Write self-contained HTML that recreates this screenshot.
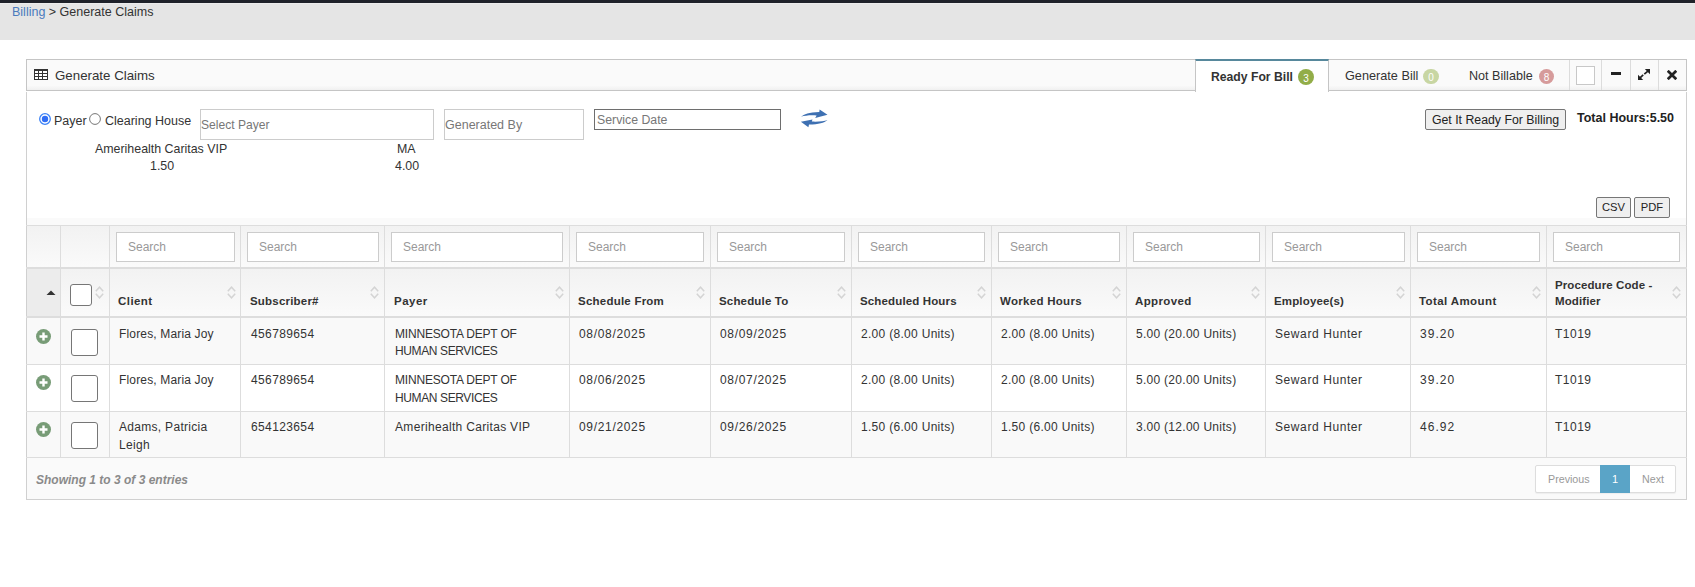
<!DOCTYPE html>
<html><head><meta charset="utf-8">
<style>
*{box-sizing:border-box;margin:0;padding:0}
html,body{width:1695px;height:587px;overflow:hidden;background:#fff}
body{position:relative;font-family:"Liberation Sans",sans-serif;font-size:13px;color:#333}
.a{position:absolute;white-space:nowrap}
#topbar{left:0;top:0;width:1695px;height:3px;background:#1f222a}
#band{left:0;top:3px;width:1695px;height:37px;background:#e5e5e5;border-top:1px solid #ececec}
#hdr{left:26px;top:59px;width:1661px;height:32px;border:1px solid #c5c5c5;background:linear-gradient(to bottom,#fafafa 0,#fafafa 85%,#f0f0f0 100%)}
#body{left:26px;top:92px;width:1661px;height:408px;border:1px solid #d0d0d0;border-top:none;background:#fff}
.tab{top:59px;height:32px}
.badge{width:16px;height:16px;border-radius:8px;color:#fff;font-size:10px;text-align:center;line-height:19px}
.sep{top:60px;width:1px;height:30px;background:#dcdcdc}
.inp{border:1px solid #ccc;background:#fff;color:#777}
.btn{border:1px solid #767676;border-radius:2px;background:#efefef;color:#222;text-align:center}
.vl{width:1px;background:#ddd}
.hl{height:1px;background:#ddd}
.srch{top:232px;height:30px;border:1px solid #ccc;background:#fff;color:#999;font-size:12px;padding:7px 0 0 11px}
.th{font-weight:bold;font-size:11.5px;color:#333}
.td{font-size:12px;color:#333;line-height:17px}
.sort{width:10px;height:14px}
.cb{border:1px solid #767676;border-radius:3px;background:#fff}
.plus{width:15px;height:15px}
</style></head>
<body>
<div id="topbar" class="a"></div>
<div id="band" class="a"></div>
<div class="a" style="left:12px;top:5px;font-size:12.5px;color:#333"><span style="color:#4b7bbd">Billing</span> &gt; Generate Claims</div>

<!-- panel header -->
<div id="hdr" class="a"></div>
<svg class="a" style="left:34px;top:69px" width="14" height="11" viewBox="0 0 14 11" shape-rendering="crispEdges">
<rect x="0" y="0" width="14" height="11" fill="#333"/>
<rect x="1" y="2" width="3" height="2" fill="#fff"/><rect x="5" y="2" width="3" height="2" fill="#fff"/><rect x="9" y="2" width="4" height="2" fill="#fff"/>
<rect x="1" y="5" width="3" height="2" fill="#fff"/><rect x="5" y="5" width="3" height="2" fill="#fff"/><rect x="9" y="5" width="4" height="2" fill="#fff"/>
<rect x="1" y="8" width="3" height="2" fill="#fff"/><rect x="5" y="8" width="3" height="2" fill="#fff"/><rect x="9" y="8" width="4" height="2" fill="#fff"/>
</svg>
<div class="a" style="left:55px;top:68px;font-size:13.3px;color:#333">Generate Claims</div>

<!-- active tab -->
<div class="a tab" style="left:1195px;width:134px;height:33px;background:#fff;border-left:1px solid #c5c5c5;border-right:1px solid #c5c5c5;border-top:2px solid #57889c"></div>
<div class="a" style="left:1211px;top:70px;font-size:12.2px;font-weight:bold;color:#333">Ready For Bill</div>
<div class="a badge" style="left:1298px;top:69px;background:#92ad48">3</div>

<div class="a" style="left:1345px;top:69px;font-size:12.7px;color:#333">Generate Bill</div>
<div class="a badge" style="left:1423px;top:69px;height:15px;line-height:17px;background:#c8d6a3">0</div>

<div class="a" style="left:1469px;top:69px;font-size:12.6px;color:#333">Not Billable</div>
<div class="a badge" style="left:1539px;top:69px;width:15px;height:15px;line-height:17px;background:#d69b9b">8</div>

<div class="a sep" style="left:1569px"></div>
<div class="a sep" style="left:1601px"></div>
<div class="a sep" style="left:1630px"></div>
<div class="a sep" style="left:1658px"></div>
<div class="a" style="left:1576px;top:66px;width:19px;height:19px;border:1px solid #c8c8c8;background:#fff"></div>
<div class="a" style="left:1611px;top:72px;width:10px;height:3px;background:#222"></div>
<svg class="a" style="left:1637px;top:68px" width="14" height="13" viewBox="0 0 14 13">
<path d="M7.8 1H13V6.2Z" fill="#222"/><path d="M11.2 2.8L7.3 6.2" stroke="#222" stroke-width="1.7"/>
<path d="M1 6.8V12H6.2Z" fill="#222"/><path d="M2.8 10.2L6.2 6.9" stroke="#222" stroke-width="1.7"/>
</svg>
<svg class="a" style="left:1667px;top:70px" width="10" height="10" viewBox="0 0 10 10">
<path d="M1.7 1.7L8.3 8.3M8.3 1.7L1.7 8.3" stroke="#222" stroke-width="2.7" stroke-linecap="square"/>
</svg>

<!-- body -->
<div id="body" class="a"></div>

<!-- radios -->
<svg class="a" style="left:39px;top:113px" width="12" height="12" viewBox="0 0 12 12">
<circle cx="6" cy="6" r="5.3" fill="#fff" stroke="#3b82f6" stroke-width="1.3"/>
<circle cx="6" cy="6" r="3.2" fill="#2f6df5"/>
</svg>
<div class="a" style="left:54px;top:114px;font-size:12.5px;color:#333">Payer</div>
<svg class="a" style="left:89px;top:113px" width="12" height="12" viewBox="0 0 12 12">
<circle cx="6" cy="6" r="5.4" fill="#fff" stroke="#767676" stroke-width="1"/>
</svg>
<div class="a" style="left:105px;top:114px;font-size:12.5px;color:#333">Clearing House</div>

<div class="a inp" style="left:200px;top:109px;width:234px;height:31px;font-size:12.1px;padding:8px 0 0 0">Select Payer</div>
<div class="a inp" style="left:444px;top:109px;width:140px;height:31px;font-size:12.5px;padding:8px 0 0 0">Generated By</div>
<div class="a" style="left:594px;top:109px;width:187px;height:21px;border:1px solid #6e6e6e;font-size:12.3px;color:#777;padding:3px 0 0 2px">Service Date</div>

<!-- refresh icon -->
<svg class="a" style="left:800px;top:109px" width="29" height="19" viewBox="0 0 29 19">
<path d="M0.9 7.8C4 5.2 9 3.2 19.3 2.9L19.6 0.5 27.5 5.7 15.2 8.9 16.6 6.4C10 6 5 6.5 0.9 7.8Z" fill="#3e70b2"/>
<path d="M27.5 11.1C24 14 19 15.6 9 15.6L8.4 18.3 0.9 12.8 12.5 10.4 11.8 12.6C18 12.8 24 12.5 27.5 11.1Z" fill="#3e70b2"/>
</svg>

<div class="a btn" style="left:1425px;top:109px;width:141px;height:21px;font-size:12.3px;padding-top:3px">Get It Ready For Billing</div>
<div class="a" style="left:1577px;top:111px;font-size:12.5px;font-weight:bold;color:#222">Total Hours:5.50</div>

<div class="a" style="left:95px;top:142px;font-size:12.4px;color:#333">Amerihealth Caritas VIP</div>
<div class="a" style="left:150px;top:159px;font-size:12.4px;color:#333">1.50</div>
<div class="a" style="left:397px;top:142px;font-size:12.4px;color:#333">MA</div>
<div class="a" style="left:395px;top:159px;font-size:12.4px;color:#333">4.00</div>

<div class="a btn" style="left:1596px;top:197px;width:35px;height:21px;font-size:11.2px;padding-top:3px">CSV</div>
<div class="a btn" style="left:1634px;top:197px;width:36px;height:21px;font-size:11.2px;padding-top:3px">PDF</div>

<!-- toolbar band -->
<div class="a" style="left:27px;top:218px;width:1659px;height:7px;background:#fafafa"></div>

<!-- table backgrounds -->
<div class="a" style="left:27px;top:226px;width:1659px;height:41px;background:linear-gradient(to bottom,#f2f2f2,#fafafa)"></div>
<div class="a" style="left:27px;top:269px;width:1659px;height:47px;background:linear-gradient(to bottom,#f2f2f2,#fafafa)"></div>
<div class="a" style="left:27px;top:269px;width:33px;height:47px;background:#ececec"></div>
<div class="a" style="left:27px;top:318px;width:1659px;height:46px;background:#f9f9f9"></div>
<div class="a" style="left:27px;top:365px;width:1659px;height:46px;background:#fff"></div>
<div class="a" style="left:27px;top:412px;width:1659px;height:45px;background:#f9f9f9"></div>
<div class="a" style="left:27px;top:458px;width:1659px;height:41px;background:#fafafa"></div>

<!-- horizontal lines -->
<div class="a hl" style="left:26px;top:225px;width:1661px"></div>
<div class="a hl" style="left:26px;top:267px;width:1661px;height:2px"></div>
<div class="a hl" style="left:26px;top:316px;width:1661px;height:2px"></div>
<div class="a hl" style="left:26px;top:364px;width:1661px"></div>
<div class="a hl" style="left:26px;top:411px;width:1661px"></div>
<div class="a hl" style="left:26px;top:457px;width:1661px"></div>

<!-- vertical lines -->
<div class="a vl" style="left:60px;top:225px;height:233px"></div>
<div class="a vl" style="left:109px;top:225px;height:233px"></div>
<div class="a vl" style="left:240px;top:225px;height:233px"></div>
<div class="a vl" style="left:384px;top:225px;height:233px"></div>
<div class="a vl" style="left:569px;top:225px;height:233px"></div>
<div class="a vl" style="left:710px;top:225px;height:233px"></div>
<div class="a vl" style="left:851px;top:225px;height:233px"></div>
<div class="a vl" style="left:991px;top:225px;height:233px"></div>
<div class="a vl" style="left:1126px;top:225px;height:233px"></div>
<div class="a vl" style="left:1265px;top:225px;height:233px"></div>
<div class="a vl" style="left:1410px;top:225px;height:233px"></div>
<div class="a vl" style="left:1546px;top:225px;height:233px"></div>

<!-- search inputs -->
<div class="a srch" style="left:116px;width:119px">Search</div>
<div class="a srch" style="left:247px;width:132px">Search</div>
<div class="a srch" style="left:391px;width:172px">Search</div>
<div class="a srch" style="left:576px;width:128px">Search</div>
<div class="a srch" style="left:717px;width:128px">Search</div>
<div class="a srch" style="left:858px;width:127px">Search</div>
<div class="a srch" style="left:998px;width:122px">Search</div>
<div class="a srch" style="left:1133px;width:127px">Search</div>
<div class="a srch" style="left:1272px;width:133px">Search</div>
<div class="a srch" style="left:1417px;width:123px">Search</div>
<div class="a srch" style="left:1553px;width:127px">Search</div>

<!-- header -->
<svg class="a" style="left:46px;top:290px" width="10" height="5" viewBox="0 0 10 5"><path d="M0.5 5L5 0.5 9.5 5Z" fill="#333"/></svg>
<div class="a cb" style="left:70px;top:284px;width:22px;height:22px"></div>

<div class="a th" style="left:118px;top:295px;letter-spacing:0.44px">Client</div>
<div class="a th" style="left:250px;top:295px;letter-spacing:0.2px">Subscriber#</div>
<div class="a th" style="left:394px;top:295px;letter-spacing:0.5px">Payer</div>
<div class="a th" style="left:578px;top:295px;letter-spacing:0.23px">Schedule From</div>
<div class="a th" style="left:719px;top:295px;letter-spacing:0.17px">Schedule To</div>
<div class="a th" style="left:860px;top:295px;letter-spacing:0.14px">Scheduled Hours</div>
<div class="a th" style="left:1000px;top:295px;letter-spacing:0.29px">Worked Hours</div>
<div class="a th" style="left:1135px;top:295px;letter-spacing:0.37px">Approved</div>
<div class="a th" style="left:1274px;top:295px;letter-spacing:0.15px">Employee(s)</div>
<div class="a th" style="left:1419px;top:295px;letter-spacing:0.4px">Total Amount</div>
<div class="a th" style="left:1555px;top:277px;line-height:16px;letter-spacing:0.1px">Procedure Code -<br>Modifier</div>

<!-- sort icons -->
<svg width="0" height="0" style="position:absolute"><defs>
<g id="srt"><path d="M0.8 5.2L4.5 1.2 8.2 5.2M0.8 7.8L4.5 11.8 8.2 7.8" fill="none" stroke="#d4d4d4" stroke-width="1.5"/></g>
</defs></svg>
<svg class="a sort" style="left:95px;top:286px" viewBox="0 0 10 14"><use href="#srt"/></svg>
<svg class="a sort" style="left:227px;top:286px" viewBox="0 0 10 14"><use href="#srt"/></svg>
<svg class="a sort" style="left:370px;top:286px" viewBox="0 0 10 14"><use href="#srt"/></svg>
<svg class="a sort" style="left:555px;top:286px" viewBox="0 0 10 14"><use href="#srt"/></svg>
<svg class="a sort" style="left:696px;top:286px" viewBox="0 0 10 14"><use href="#srt"/></svg>
<svg class="a sort" style="left:837px;top:286px" viewBox="0 0 10 14"><use href="#srt"/></svg>
<svg class="a sort" style="left:977px;top:286px" viewBox="0 0 10 14"><use href="#srt"/></svg>
<svg class="a sort" style="left:1112px;top:286px" viewBox="0 0 10 14"><use href="#srt"/></svg>
<svg class="a sort" style="left:1251px;top:286px" viewBox="0 0 10 14"><use href="#srt"/></svg>
<svg class="a sort" style="left:1396px;top:286px" viewBox="0 0 10 14"><use href="#srt"/></svg>
<svg class="a sort" style="left:1532px;top:286px" viewBox="0 0 10 14"><use href="#srt"/></svg>
<svg class="a sort" style="left:1672px;top:286px" viewBox="0 0 10 14"><use href="#srt"/></svg>

<!-- rows -->
<svg width="0" height="0" style="position:absolute"><defs>
<g id="pl"><circle cx="7.5" cy="7.5" r="7.5" fill="#789c77"/><path d="M7.5 3.5V11.5M3.5 7.5H11.5" stroke="#fff" stroke-width="2.4"/></g>
</defs></svg>

<svg class="a plus" style="left:36px;top:329px" viewBox="0 0 15 15"><use href="#pl"/></svg>
<div class="a cb" style="left:71px;top:329px;width:27px;height:27px"></div>
<div class="a td" style="left:119px;top:326px;letter-spacing:0.16px">Flores, Maria Joy</div>
<div class="a td" style="left:251px;top:326px;letter-spacing:0.375px">456789654</div>
<div class="a td" style="left:395px;top:326px"><span style="letter-spacing:-0.19px">MINNESOTA DEPT OF</span><br><span style="letter-spacing:-0.38px">HUMAN SERVICES</span></div>
<div class="a td" style="left:579px;top:326px;letter-spacing:0.67px">08/08/2025</div>
<div class="a td" style="left:720px;top:326px;letter-spacing:0.67px">08/09/2025</div>
<div class="a td" style="left:861px;top:326px;letter-spacing:0.3px">2.00 (8.00 Units)</div>
<div class="a td" style="left:1001px;top:326px;letter-spacing:0.3px">2.00 (8.00 Units)</div>
<div class="a td" style="left:1136px;top:326px;letter-spacing:0.28px">5.00 (20.00 Units)</div>
<div class="a td" style="left:1275px;top:326px;letter-spacing:0.59px">Seward Hunter</div>
<div class="a td" style="left:1420px;top:326px;letter-spacing:1.05px">39.20</div>
<div class="a td" style="left:1555px;top:326px;letter-spacing:0.5px">T1019</div>

<svg class="a plus" style="left:36px;top:375px" viewBox="0 0 15 15"><use href="#pl"/></svg>
<div class="a cb" style="left:71px;top:375px;width:27px;height:27px"></div>
<div class="a td" style="left:119px;top:370.5px;line-height:18px;letter-spacing:0.16px">Flores, Maria Joy</div>
<div class="a td" style="left:251px;top:370.5px;line-height:18px;letter-spacing:0.375px">456789654</div>
<div class="a td" style="left:395px;top:370.5px;line-height:18px"><span style="letter-spacing:-0.19px">MINNESOTA DEPT OF</span><br><span style="letter-spacing:-0.38px">HUMAN SERVICES</span></div>
<div class="a td" style="left:579px;top:370.5px;line-height:18px;letter-spacing:0.67px">08/06/2025</div>
<div class="a td" style="left:720px;top:370.5px;line-height:18px;letter-spacing:0.67px">08/07/2025</div>
<div class="a td" style="left:861px;top:370.5px;line-height:18px;letter-spacing:0.3px">2.00 (8.00 Units)</div>
<div class="a td" style="left:1001px;top:370.5px;line-height:18px;letter-spacing:0.3px">2.00 (8.00 Units)</div>
<div class="a td" style="left:1136px;top:370.5px;line-height:18px;letter-spacing:0.28px">5.00 (20.00 Units)</div>
<div class="a td" style="left:1275px;top:370.5px;line-height:18px;letter-spacing:0.59px">Seward Hunter</div>
<div class="a td" style="left:1420px;top:370.5px;line-height:18px;letter-spacing:1.05px">39.20</div>
<div class="a td" style="left:1555px;top:370.5px;line-height:18px;letter-spacing:0.5px">T1019</div>

<svg class="a plus" style="left:36px;top:422px" viewBox="0 0 15 15"><use href="#pl"/></svg>
<div class="a cb" style="left:71px;top:422px;width:27px;height:27px"></div>
<div class="a td" style="left:119px;top:417.5px;line-height:18px;letter-spacing:0.3px">Adams, Patricia<br>Leigh</div>
<div class="a td" style="left:251px;top:417.5px;line-height:18px;letter-spacing:0.375px">654123654</div>
<div class="a td" style="left:395px;top:417.5px;line-height:18px;letter-spacing:0.32px">Amerihealth Caritas VIP</div>
<div class="a td" style="left:579px;top:417.5px;line-height:18px;letter-spacing:0.67px">09/21/2025</div>
<div class="a td" style="left:720px;top:417.5px;line-height:18px;letter-spacing:0.67px">09/26/2025</div>
<div class="a td" style="left:861px;top:417.5px;line-height:18px;letter-spacing:0.3px">1.50 (6.00 Units)</div>
<div class="a td" style="left:1001px;top:417.5px;line-height:18px;letter-spacing:0.3px">1.50 (6.00 Units)</div>
<div class="a td" style="left:1136px;top:417.5px;line-height:18px;letter-spacing:0.28px">3.00 (12.00 Units)</div>
<div class="a td" style="left:1275px;top:417.5px;line-height:18px;letter-spacing:0.59px">Seward Hunter</div>
<div class="a td" style="left:1420px;top:417.5px;line-height:18px;letter-spacing:1.05px">46.92</div>
<div class="a td" style="left:1555px;top:417.5px;line-height:18px;letter-spacing:0.5px">T1019</div>

<!-- footer -->
<div class="a" style="left:36px;top:473px;font-size:12px;font-weight:bold;font-style:italic;color:#8a8a8a">Showing 1 to 3 of 3 entries</div>
<div class="a" style="left:1535px;top:465px;width:141px;height:28px;border:1px solid #ddd;border-radius:2px;background:#fff;box-shadow:0 1px 1px rgba(0,0,0,.05)"></div>
<div class="a" style="left:1600px;top:465px;width:30px;height:28px;background:#5aa4c7"></div>
<div class="a" style="left:1548px;top:473px;font-size:10.7px;color:#999">Previous</div>
<div class="a" style="left:1612px;top:473px;font-size:11px;color:#fff">1</div>
<div class="a" style="left:1642px;top:473px;font-size:10.7px;color:#999">Next</div>

</body></html>
